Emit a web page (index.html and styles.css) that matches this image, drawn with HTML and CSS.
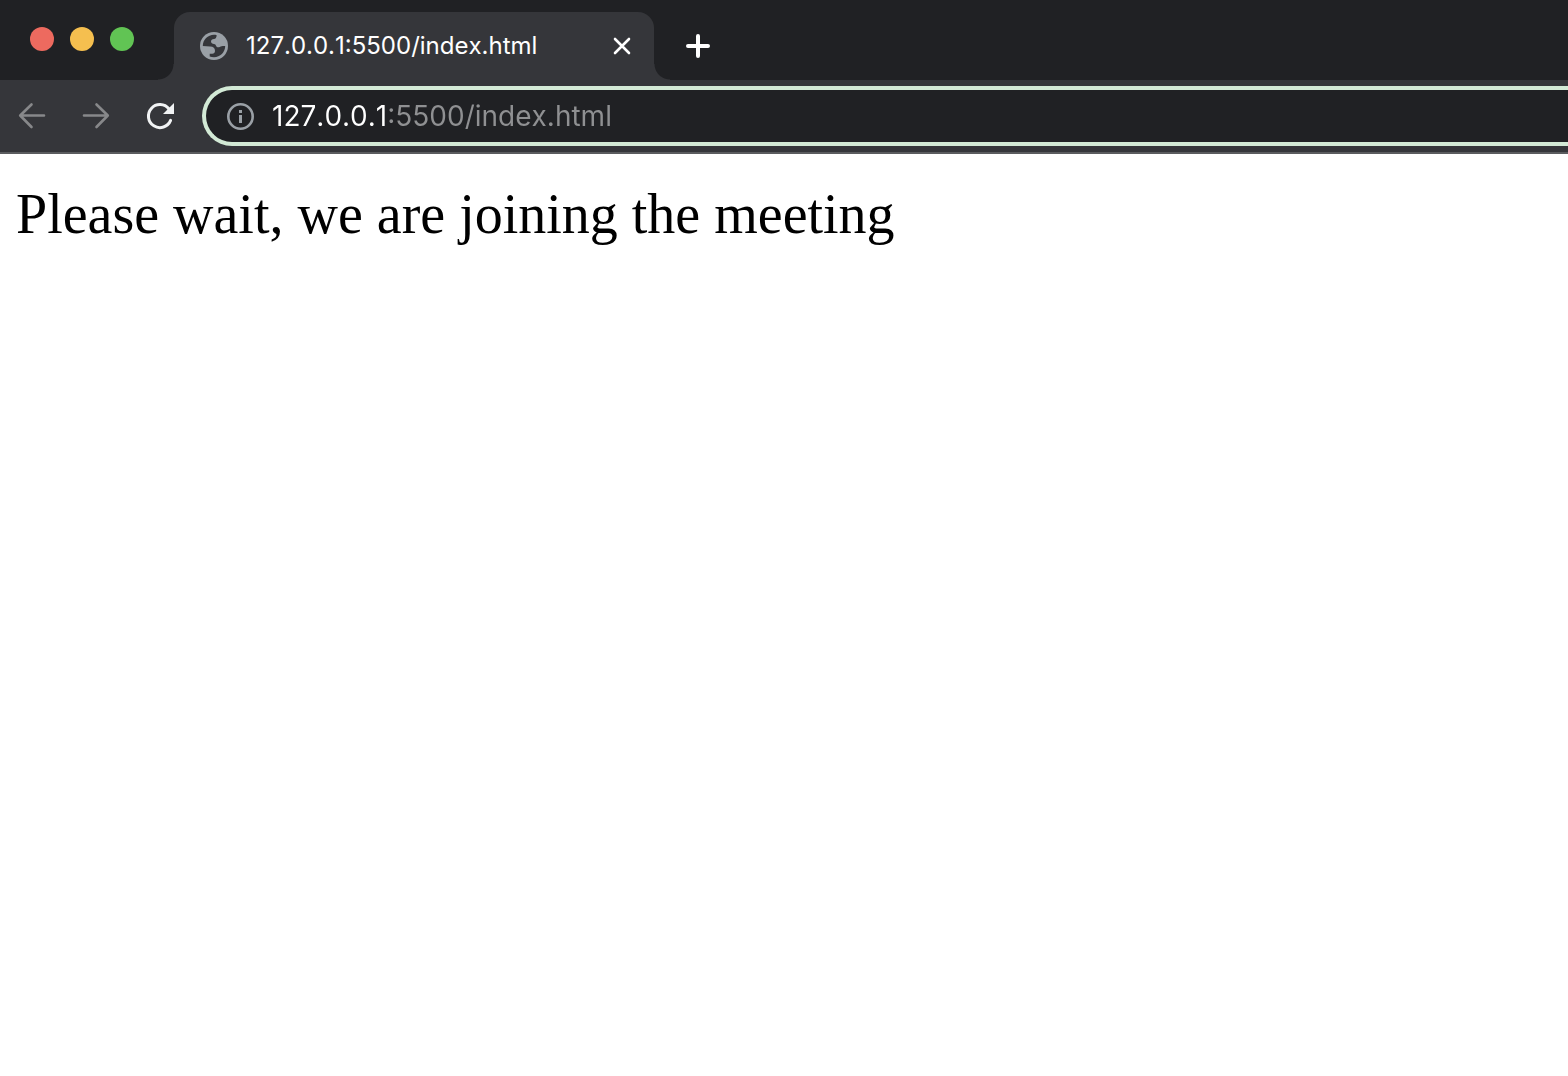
FILE: index.html
```html
<!DOCTYPE html>
<html lang="en">
<head>
  <meta charset="utf-8">
  <meta name="viewport" content="width=device-width, initial-scale=1">
  <title>127.0.0.1:5500/index.html</title>
  <link rel="stylesheet" href="styles.css">
</head>
<body>
  <header class="browser">
    <div class="tab-strip">
      <div class="window-controls">
        <button class="light light-close" aria-label="Close window"></button>
        <button class="light light-minimize" aria-label="Minimize window"></button>
        <button class="light light-zoom" aria-label="Zoom window"></button>
      </div>
      <div class="tab">
        <svg class="icon" width="28" height="28" viewBox="0 0 28 28" aria-hidden="true">
          <circle cx="14" cy="14" r="14" fill="#9aa0a6"/>
          <path fill="#35363a" d="M2.800 14C2.800 7.800 7.800 2.800 14 2.800c1 0 1.900.1 2.700.4-.2 2.200-1 3.600-2.700 3.800-2 .2-3 1-3 2.600 0 1.800 1.400 2.200 3 2.400 1.200.2 1.600.8 2 1.800.5 1.200 1.400 1.700 2.800 1.400 1.400-.3 2.200-1.200 4-1.200h2.400c0 6.200-5 11.200-11.200 11.200-1.600 0-3-.3-4.300-.8v-2.700h2.600c1.600 0 2.700-1 2.700-2.600 0-3-1.600-4.600-4.800-4.600z"/>
        </svg>
        <span class="tab-title">127.0.0.1:5500/index.html</span>
        <button class="icon-button" aria-label="Close tab">
          <svg class="icon" width="20" height="20" viewBox="0 0 20 20" aria-hidden="true">
            <path d="M3 3l14 14M17 3L3 17" fill="none" stroke="#fff" stroke-width="2.600" stroke-linecap="round"/>
          </svg>
        </button>
      </div>
      <button class="icon-button new-tab" aria-label="New tab">
        <svg class="icon" width="24" height="24" viewBox="0 0 24 24" aria-hidden="true">
          <path d="M12 2v20M2 12h20" fill="none" stroke="#fff" stroke-width="4" stroke-linecap="round"/>
        </svg>
      </button>
    </div>
    <div class="toolbar">
      <nav class="nav-buttons" aria-label="Navigation">
        <button class="icon-button" aria-label="Back">
          <svg class="icon" width="32" height="32" viewBox="0 0 32 32" aria-hidden="true">
            <path d="M28 15.500H4.500M15.500 4.500L4.200 15.500l11.300 11.500" fill="none" stroke="#87888a" stroke-width="2.600" stroke-linecap="round" stroke-linejoin="round"/>
          </svg>
        </button>
        <button class="icon-button" aria-label="Forward">
          <svg class="icon" width="32" height="32" viewBox="0 0 32 32" aria-hidden="true">
            <path d="M4 15.500h23.500M16.500 4.500L27.800 15.500 16.500 27" fill="none" stroke="#87888a" stroke-width="2.600" stroke-linecap="round" stroke-linejoin="round"/>
          </svg>
        </button>
        <button class="icon-button" aria-label="Reload">
          <svg class="icon" width="32" height="32" viewBox="0 0 32 32" aria-hidden="true">
            <path d="M26.600 20.400A11.500 11.500 0 1 1 25 9" fill="none" stroke="#f1f3f4" stroke-width="3" stroke-linecap="round"/>
            <path d="M30 3v11H19z" fill="#f1f3f4"/>
          </svg>
        </button>
      </nav>
      <div class="address-bar">
        <svg class="icon" width="28" height="28" viewBox="0 0 28 28" aria-hidden="true">
          <circle cx="14.500" cy="14.500" r="12.200" fill="none" stroke="#9aa0a6" stroke-width="2.600"/>
          <path fill="#9aa0a6" d="M13 8h3v3h-3zM13 13h3v8h-3z"/>
        </svg>
        <input class="address" type="text" aria-label="Address" value="127.0.0.1:5500/index.html" spellcheck="false">
      </div>
    </div>
  </header>
  <main class="page">
    <p class="message">Please wait, we are joining the meeting</p>
  </main>
</body>
</html>
```

FILE: styles.css
```css
* {
  box-sizing: border-box;
}

body {
  margin: 0;
  background: #fff;
  color: #000;
}

button {
  padding: 0;
  border: 0;
  background: none;
}

.browser {
  font-family: Inter, "Liberation Sans", sans-serif;
  font-kerning: none;
  background: #35363a;
  border-bottom: 2px solid #5b5c5f;
}

.icon {
  display: block;
  flex: none;
}

.tab-strip {
  display: flex;
  align-items: stretch;
  height: 80px;
  padding-top: 12px;
  background: #202124;
}

.window-controls {
  display: flex;
  gap: 16px;
  width: 174px;
  padding: 15px 0 0 30px;
}

.light {
  width: 24px;
  height: 24px;
  border-radius: 50%;
}

.light-close {
  background: #ed6a5f;
}

.light-minimize {
  background: #f5bf4f;
}

.light-zoom {
  background: #61c454;
}

.tab {
  position: relative;
  display: flex;
  align-items: center;
  gap: 18px;
  width: 480px;
  padding: 0 22px 0 26px;
  border-radius: 16px 16px 0 0;
  background: #35363a;
}

/* Concave feet joining the tab to the toolbar */
.tab::before,
.tab::after {
  content: "";
  position: absolute;
  bottom: 0;
  width: 16px;
  height: 16px;
}

.tab::before {
  right: 100%;
  background: radial-gradient(circle at 0 0, #202124 15px, #35363a 16px);
}

.tab::after {
  left: 100%;
  background: radial-gradient(circle at 100% 0, #202124 15px, #35363a 16px);
}

.tab-title {
  flex: 1;
  color: #fff;
  font-size: 24px;
  line-height: 32px;
  white-space: nowrap;
}

.new-tab {
  margin-left: 32px;
}

.toolbar {
  display: flex;
  align-items: center;
  gap: 26px;
  height: 72px;
  padding-left: 16px;
}

.nav-buttons {
  display: flex;
  gap: 32px;
}

.address-bar {
  display: flex;
  flex: 1;
  align-items: center;
  gap: 18px;
  height: 60px;
  padding-left: 20px;
  border: 4px solid #d3ead6;
  border-right: 0;
  border-radius: 30px 0 0 30px;
  background: #202124;
}

/* The host is bright and the rest of the URL is dimmed */
.address {
  flex: 1;
  min-width: 0;
  padding: 0;
  border: 0;
  outline: 0;
  background: linear-gradient(to right, #fff 117px, #8f9092 117px);
  -webkit-background-clip: text;
  background-clip: text;
  color: transparent;
  font: inherit;
  font-kerning: none;
  font-size: 28px;
  line-height: 36px;
}

.page {
  padding: 28px 16px;
}

.message {
  margin: 0;
  font-family: "Liberation Serif", "Times New Roman", serif;
  font-size: 56px;
  line-height: 64px;
}
```
